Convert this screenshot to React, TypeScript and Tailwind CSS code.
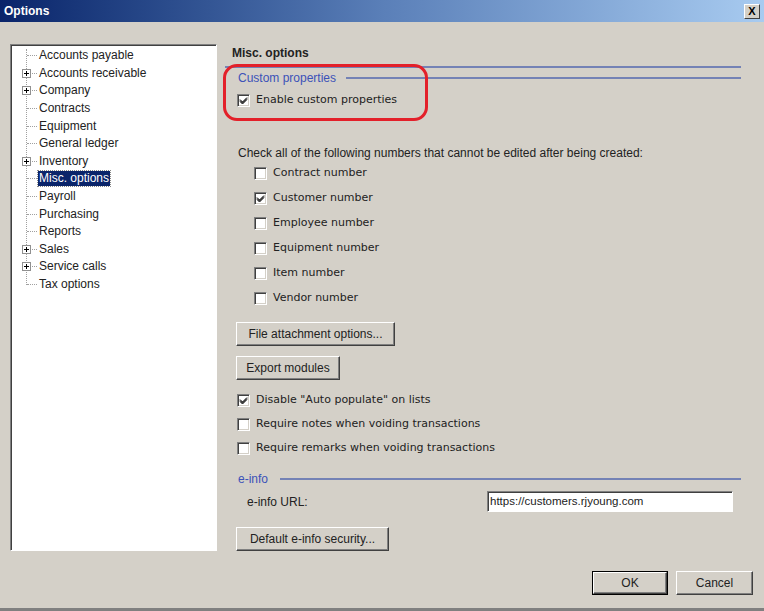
import React from 'react';

const treeItems: { label: string; plus?: boolean; selected?: boolean }[] = [
   { label: 'Accounts payable' },
   { label: 'Accounts receivable', plus: true },
   { label: 'Company', plus: true },
   { label: 'Contracts' },
   { label: 'Equipment' },
   { label: 'General ledger' },
   { label: 'Inventory', plus: true },
   { label: 'Misc. options', selected: true },
   { label: 'Payroll' },
   { label: 'Purchasing' },
   { label: 'Reports' },
   { label: 'Sales', plus: true },
   { label: 'Service calls', plus: true },
   { label: 'Tax options' },
];

const numberItems = [
   { label: 'Contract number', checked: false },
   { label: 'Customer number', checked: true },
   { label: 'Employee number', checked: false },
   { label: 'Equipment number', checked: false },
   { label: 'Item number', checked: false },
   { label: 'Vendor number', checked: false },
];

const Check = ({ checked }: { checked?: boolean }) => (
   <span className="relative w-[13px] h-[13px] shrink-0 bg-white border-t border-l border-t-[#808080] border-l-[#808080] border-r border-b border-r-white border-b-white shadow-[inset_1px_1px_0_#404040,inset_-1px_-1px_0_#d4d0c8]">
      {checked && (
         <svg className="absolute left-[1px] top-[1px]" width="9" height="9" viewBox="0 0 9 9">
            <path d="M1 3.5 L3.5 6 L8 1.5 M1 4.5 L3.5 7 L8 2.5 M1 5.5 L3.5 8 L8 3.5" stroke="#000" strokeWidth="1" fill="none" />
         </svg>
      )}
   </span>
);

const Button = ({ label, className = '', isDefault = false }: { label: string; className?: string; isDefault?: boolean }) => (
   <div className={`h-[24px] ${isDefault ? 'border border-black' : ''} ${className}`}>
      <div className="h-full bg-[#d4d0c8] border-t border-l border-t-white border-l-white border-r border-b border-r-[#404040] border-b-[#404040] shadow-[inset_-1px_-1px_0_#808080] flex items-center justify-center text-[12px] text-[#222]">
         {label}
      </div>
   </div>
);

const SectionHeader = ({ label, lineLeft }: { label: string; lineLeft: string }) => (
   <div className="h-[16px] flex items-center">
      <span className="pl-[13px] text-[12px] text-[#3c52b8]">{label}</span>
      <div className={`${lineLeft} flex-1 h-[2px] bg-[#7482b5]`}></div>
   </div>
);

export default function App() {
   return (
      <div className="relative w-[764px] h-[611px] bg-[#d4d0c8] overflow-hidden font-['Liberation_Sans',sans-serif] text-[#222]">
         {/* title bar */}
         <div className="h-[22px] flex items-center justify-between bg-gradient-to-r from-[#0a246a] via-[#5a7fb8] to-[#a8cbf0] pl-[4px] pr-[4px]">
            <span className="text-white font-bold text-[12px]">Options</span>
            <div className="w-[16px] h-[15px] bg-[#d4d0c8] border-t border-l border-t-white border-l-white border-r border-b border-r-[#404040] border-b-[#404040] flex items-center justify-center text-[11px] font-bold leading-none text-black">
               X
            </div>
         </div>

         <div className="flex pt-[22px] pl-[10px]">
            {/* tree */}
            <div className="relative w-[207px] h-[507px] bg-white border-t border-l border-t-[#808080] border-l-[#808080] border-r border-b border-r-white border-b-white shadow-[inset_1px_1px_0_#404040]">
               <div className="absolute left-[15px] top-[4px] h-[236px] border-l border-dotted border-[#a0a0a0]"></div>
               <div className="pt-[2px]">
                  {treeItems.map((it) => (
                     <div key={it.label} className="relative h-[17.6px] flex items-center">
                        <div className="absolute left-[16px] w-[10px] border-t border-dotted border-[#a0a0a0]"></div>
                        {it.plus && (
                           <div className="absolute left-[11px] w-[9px] h-[9px] bg-white border border-[#909090] flex items-center justify-center">
                              <div className="absolute w-[5px] h-px bg-black"></div>
                              <div className="absolute w-px h-[5px] bg-black"></div>
                           </div>
                        )}
                        <span
                           className={`ml-[27px] px-[1px] text-[12px] leading-[15px] ${it.selected ? 'bg-[#0a246a] text-white outline outline-1 outline-dotted outline-[#888]' : 'text-[#222]'}`}
                        >
                           {it.label}
                        </span>
                     </div>
                  ))}
               </div>
            </div>

            {/* right pane */}
            <div className="ml-[8px] w-[516px] flex flex-col">
               <div className="mt-[1px] h-[16px] pl-[7px] flex items-center font-bold text-[12px] text-[#222]">Misc. options</div>
               <div className="mt-[5px] h-[2px] bg-[#7482b5]"></div>
               <div className="mt-[2px]">
                  <SectionHeader label="Custom properties" lineLeft="ml-[10px]" />
               </div>
               <div className="mt-[6px] h-[16px] pl-[12px] flex items-center gap-[6px] font-['DejaVu_Sans',sans-serif] text-[11px]">
                  <Check checked />
                  <span>Enable custom properties</span>
               </div>

               <div className="mt-[37px] h-[16px] pl-[13px] flex items-center text-[12px]">
                  Check all of the following numbers that cannot be edited after being created:
               </div>
               <div className="flex flex-col">
                  {numberItems.map((n) => (
                     <div key={n.label} className="h-[25px] pl-[29px] flex items-center gap-[6px] font-['DejaVu_Sans',sans-serif] text-[11px]">
                        <Check checked={n.checked} />
                        <span>{n.label}</span>
                     </div>
                  ))}
               </div>

               <Button label="File attachment options..." className="mt-[11px] ml-[11px] w-[159px]" />
               <Button label="Export modules" className="mt-[10px] ml-[11px] w-[104px]" />

               <div className="mt-[8px] flex flex-col font-['DejaVu_Sans',sans-serif] text-[11px]">
                  {[
                     { label: 'Disable "Auto populate" on lists', checked: true },
                     { label: 'Require notes when voiding transactions', checked: false },
                     { label: 'Require remarks when voiding transactions', checked: false },
                  ].map((c) => (
                     <div key={c.label} className="h-[24px] pl-[12px] flex items-center gap-[6px]">
                        <Check checked={c.checked} />
                        <span>{c.label}</span>
                     </div>
                  ))}
               </div>

               <div className="mt-[11px]">
                  <SectionHeader label="e-info" lineLeft="ml-[12px]" />
               </div>
               <div className="mt-[4px] h-[21px] flex items-center">
                  <span className="pl-[22px] w-[262px] text-[12px]">e-info URL:</span>
                  <div className="w-[246px] h-[21px] bg-white border-t border-l border-t-[#808080] border-l-[#808080] border-r border-b border-r-white border-b-white shadow-[inset_1px_1px_0_#404040] flex items-center pl-[2px] text-[11.5px]">
                     https://customers.rjyoung.com
                  </div>
               </div>
               <Button label="Default e-info security..." className="mt-[15px] ml-[11px] w-[153px]" />
            </div>
         </div>

         {/* footer */}
         <div className="mt-[20px] flex justify-end pr-[11px] gap-[8px]">
            <Button label="OK" isDefault className="w-[76px]" />
            <Button label="Cancel" className="w-[77px]" />
         </div>

         <div className="absolute left-0 right-0 bottom-0 h-[3px] bg-[#808080]"></div>

         {/* annotation */}
         <div className="absolute left-[223px] top-[64px] w-[205px] h-[57px] border-[3px] border-[#e3202a] rounded-[14px] pointer-events-none"></div>
      </div>
   );
}
